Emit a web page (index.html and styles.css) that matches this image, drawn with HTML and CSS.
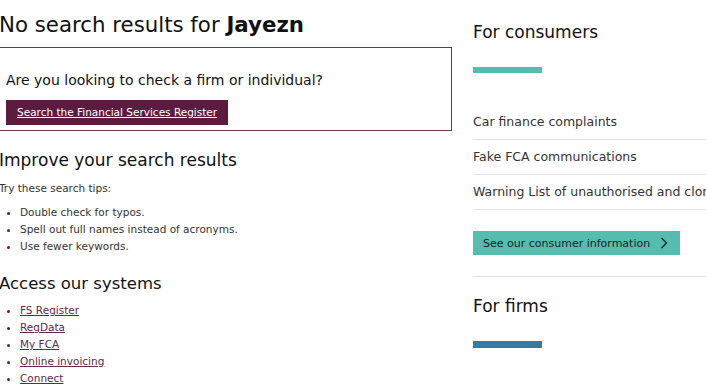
FILE: index.html
```html
<!DOCTYPE html>
<html lang="en">
<head>
<meta charset="utf-8">
<title>Search</title>
<link rel="stylesheet" href="styles.css">
</head>
<body>
<div class="page">
  <main class="main">
    <h1 class="title">No search results for <strong>Jayezn</strong></h1>
    <div class="callout">
      <p class="callout-q">Are you looking to check a firm or individual?</p>
      <a class="btn-register" href="#">Search the Financial Services Register</a>
    </div>
    <h2 class="section-h">Improve your search results</h2>
    <p class="tips-intro">Try these search tips:</p>
    <ul class="list">
      <li>Double check for typos.</li>
      <li>Spell out full names instead of acronyms.</li>
      <li>Use fewer keywords.</li>
    </ul>
    <h2 class="section-h systems-h">Access our systems</h2>
    <ul class="list links">
      <li><a href="#">FS Register</a></li>
      <li><a href="#">RegData</a></li>
      <li><a href="#">My FCA</a></li>
      <li><a href="#">Online invoicing</a></li>
      <li><a href="#">Connect</a></li>
    </ul>
  </main>
  <aside class="side">
    <h2 class="side-h">For consumers</h2>
    <div class="bar bar-teal"></div>
    <ul class="side-list">
      <li>Car finance complaints</li>
      <li>Fake FCA communications</li>
      <li>Warning List of unauthorised and cloned firms</li>
    </ul>
    <a class="btn-teal" href="#">See our consumer information<svg class="chev" width="8" height="12" viewBox="0 0 8 12" aria-hidden="true"><path d="M1.5 1 L6.5 6 L1.5 11" fill="none" stroke="#222" stroke-width="1.3"/></svg></a>
    <div class="rule"></div>
    <h2 class="side-h firms-h">For firms</h2>
    <div class="bar bar-blue"></div>
  </aside>
</div>
</body>
</html>
```
FILE: styles.css
```css
html, body { margin: 0; padding: 0; background: #fff; }
body {
  font-family: "DejaVu Sans", Verdana, sans-serif;
  color: #222;
  overflow: hidden;
}
.page {
  display: flex;
  align-items: flex-start;
  margin-left: -1px;
  width: 760px;
}
.main { width: 453px; flex: none; }
.title {
  font-weight: normal;
  font-size: 21.3px;
  margin: 12px 0 0 0;
  line-height: 26px;
  color: #111;
}
.title strong { font-weight: bold; }
.callout {
  margin-top: 9px;
  border: 1px solid #6e3558;
  height: 84px;
  box-sizing: border-box;
  padding: 23px 0 0 6px;
}
.callout-q {
  margin: 0;
  font-size: 14px;
  line-height: 18px;
  color: #111;
}
.btn-register {
  display: inline-block;
  margin-top: 11px;
  background: #5b1c3f;
  color: #fff;
  font-size: 10.5px;
  line-height: 25px;
  padding: 0 11px;
  text-decoration: underline;
}
.section-h {
  font-weight: normal;
  font-size: 17px;
  line-height: 22px;
  margin: 18px 0 0 0;
  color: #111;
}
.tips-intro {
  font-size: 10.5px;
  line-height: 16px;
  margin: 9px 0 0 0;
  color: #333;
}
.list {
  margin: 8px 0 0 0;
  padding: 0 0 0 21px;
  font-size: 10.5px;
  line-height: 17px;
  color: #333;
}
.list li::marker { color: #5b1c3f; }
.systems-h { margin-top: 18px; font-size: 16.5px; }
.links { margin-top: 7px; }
.links a { color: #5b2a4c; text-decoration: underline; }
.side { width: 290px; margin-left: 21px; flex: none; }
.side-h {
  font-weight: normal;
  font-size: 17px;
  line-height: 22px;
  margin: 21px 0 0 0;
  color: #111;
}
.bar { width: 69px; height: 6px; }
.bar-teal { background: #55bcb0; margin-top: 24px; }
.bar-blue { background: #357ba8; margin-top: 24px; height: 7px; }
.side-list {
  list-style: none;
  margin: 32px 0 0 0;
  padding: 0;
  font-size: 12.5px;
  color: #333;
  white-space: nowrap;
}
.side-list li {
  line-height: 34px;
  border-bottom: 1px solid #e0e0e0;
}
.btn-teal {
  display: inline-flex;
  align-items: center;
  margin-top: 21px;
  background: #55bcb0;
  color: #222;
  font-size: 11px;
  height: 24px;
  padding: 0 12px 0 10px;
  text-decoration: none;
}
.chev { margin-left: 10px; }
.rule { border-top: 1px solid #e0e0e0; margin-top: 21px; }
.firms-h { margin-top: 18px; }
```
